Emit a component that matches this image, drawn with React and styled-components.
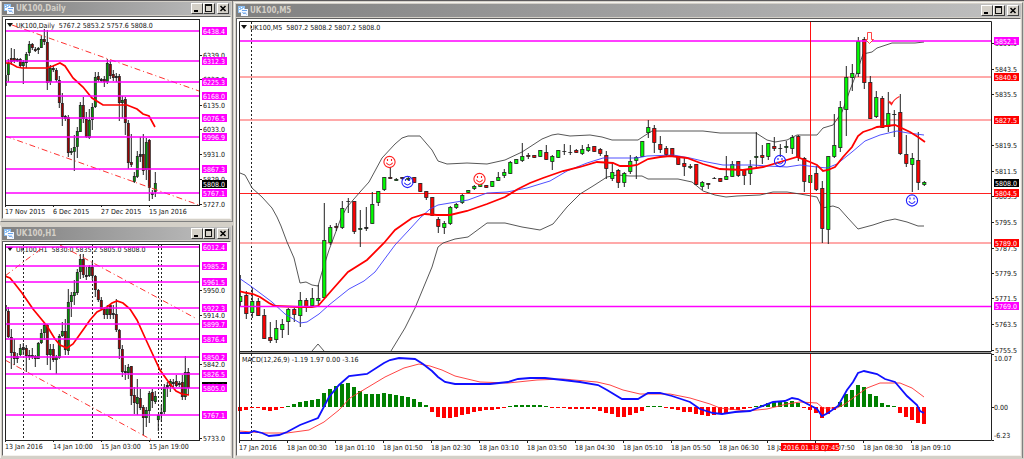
import React from "react";
import styled, { createGlobalStyle } from "styled-components";

const GlobalStyle = createGlobalStyle`
  body {
    margin: 0;
    background: #d4d0c8;
    font-family: "DejaVu Sans Condensed", "DejaVu Sans", sans-serif;
  }
`;

const Workspace = styled.main`
  display: grid;
  grid-template-columns: minmax(0, 233fr) minmax(0, 791fr);
  border-top: 1px solid #5c5a5c;
  margin-bottom: -1px;
`;

const Column = styled.div`
  display: flex;
  flex-direction: column;
  gap: 3px;
  ${({ $inset }) => $inset && "padding: 1px 1px 0;"}
`;

const Window = styled.section`
  border: 1px solid #808080;
  border-top-color: ${({ $inset }) => ($inset ? "#f4f2ee" : "#d4d0c8")};
  border-left-color: #f4f2ee;
  padding: 1px 1px 2px;
  background: #d4d0c8;

  &:first-child {
    ${({ $inset }) => !$inset && "border-top: 0;"}
  }
`;

const TitleBar = styled.header`
  display: flex;
  align-items: center;
  height: 13px;
  padding: 0 2px;
  margin-bottom: 1px;
  background: linear-gradient(to right, #808080, #c0c0c0);
`;

const Title = styled.h2`
  flex: 1;
  margin: 0 0 0 2px;
  font-size: 8px;
  line-height: 12px;
  font-weight: bold;
  color: #d4d0c8;
`;

const WindowButton = styled.button`
  display: flex;
  width: 12px;
  height: 11px;
  padding: 0;
  margin-left: ${({ $apart }) => ($apart ? "2px" : "0")};
  border: 1px solid;
  border-color: #fff #404040 #404040 #fff;
  background: #d4d0c8;
`;

const Pane = styled.div`
  border: 1px solid;
  border-color: #606060 #f4f2ee #f4f2ee #606060;
  background: #fff;
`;

const Plot = styled.svg`
  display: block;
  width: 100%;
  height: auto;
`;

const Label = styled.text`
  font-size: 7px;
  fill: ${({ $light }) => ($light ? "#fff" : "#111")};
  white-space: pre;
`;

const MAGENTA = "#ff00ff";
const RED = "#ff0000";
const INK = "#222";

// candles are [high, low, body top, body bottom, kind]
// g = up, r = down, d = doji
const dailyCandles = [
  [74, 87, 75, 86, "g"], [59, 82, 63, 75, "g"], [48, 65, 58, 62, "r"], [49, 63, 58, 61, "r"],
  [58, 62, 59, 61, "d"], [58, 68, 59, 66, "r"], [60, 84, 62, 66, "g"], [52, 68, 54, 63, "g"],
  [41, 56, 44, 53, "g"], [43, 50, 44, 48, "r"], [47, 52, 49, 51, "r"], [47, 54, 48, 50, "g"],
  [36, 48, 39, 48, "g"], [29, 45, 39, 42, "r"], [30, 90, 42, 83, "r"], [65, 85, 68, 82, "g"],
  [66, 72, 68, 70, "g"], [68, 82, 70, 80, "r"], [76, 108, 80, 103, "r"], [93, 126, 103, 117, "r"],
  [115, 121, 116, 119, "d"], [115, 157, 117, 153, "r"], [148, 155, 151, 153, "g"], [135, 171, 147, 152, "g"],
  [127, 158, 131, 147, "g"], [102, 132, 105, 132, "g"], [97, 123, 105, 119, "r"], [112, 138, 119, 137, "r"],
  [109, 139, 120, 138, "g"], [103, 130, 107, 120, "g"], [72, 108, 77, 107, "g"], [72, 82, 76, 80, "r"],
  [78, 82, 79, 81, "d"], [76, 87, 79, 82, "r"], [59, 84, 63, 82, "g"], [61, 79, 64, 76, "r"],
  [70, 81, 74, 78, "r"], [73, 82, 76, 78, "d"], [74, 121, 76, 103, "r"], [96, 118, 100, 103, "g"],
  [97, 135, 99, 123, "r"], [120, 169, 123, 163, "r"], [134, 167, 162, 165, "r"], [172, 183, 176, 182, "g"],
  [151, 178, 156, 177, "g"], [137, 162, 154, 157, "d"], [134, 175, 154, 171, "r"], [138, 180, 142, 170, "g"],
  [139, 201, 140, 188, "r"], [190, 199, 193, 195, "d"], [172, 197, 183, 192, "g"],
];

const hourCandles = [
  [295, 313, 305, 311, "r"], [307, 338, 311, 337, "r"], [329, 369, 337, 353, "r"], [339, 365, 352, 359, "r"],
  [353, 363, 356, 359, "d"], [344, 356, 348, 355, "g"], [343, 355, 347, 350, "d"], [345, 372, 348, 356, "r"],
  [350, 360, 355, 357, "d"], [348, 359, 355, 357, "d"], [355, 367, 356, 359, "r"], [342, 359, 343, 359, "g"],
  [329, 344, 333, 343, "g"], [323, 340, 325, 333, "g"], [324, 365, 325, 355, "r"], [344, 370, 349, 355, "g"],
  [344, 362, 349, 360, "r"], [355, 374, 357, 360, "g"], [334, 359, 336, 358, "g"], [322, 337, 331, 336, "g"],
  [319, 355, 331, 350, "r"], [289, 355, 302, 351, "g"], [292, 317, 295, 302, "g"], [280, 305, 292, 296, "g"],
  [269, 295, 272, 293, "g"], [254, 279, 259, 272, "g"], [254, 278, 259, 275, "r"], [267, 280, 275, 277, "d"],
  [265, 277, 267, 276, "g"], [262, 280, 267, 276, "r"], [275, 297, 276, 290, "r"], [289, 302, 290, 300, "r"],
  [297, 310, 300, 309, "r"], [307, 319, 309, 315, "r"], [305, 319, 308, 315, "g"], [304, 319, 305, 315, "r"],
  [305, 319, 313, 315, "d"], [299, 332, 314, 330, "r"], [329, 359, 330, 349, "r"], [345, 377, 349, 372, "r"],
  [365, 380, 371, 373, "d"], [364, 379, 367, 373, "g"], [366, 405, 366, 396, "r"], [387, 414, 395, 403, "r"],
  [379, 415, 397, 404, "g"], [389, 410, 398, 408, "r"], [405, 435, 407, 418, "r"], [407, 427, 410, 418, "g"],
  [391, 423, 393, 411, "g"], [389, 408, 392, 401, "r"], [391, 404, 396, 402, "g"], [414, 431, 415, 420, "g"],
  [405, 422, 412, 414, "g"], [384, 414, 387, 412, "g"], [382, 397, 385, 388, "d"], [379, 392, 381, 386, "g"],
  [379, 387, 382, 384, "d"], [375, 387, 381, 386, "r"], [381, 387, 383, 385, "d"], [375, 400, 382, 397, "r"],
  [356, 400, 372, 397, "g"], [368, 395, 372, 388, "r"],
];

const fiveMinCandles = [
  [275, 306, 296, 302, "g"], [291, 319, 295, 314, "r"], [288, 318, 301, 313, "g"], [298, 316, 301, 316, "r"],
  [309, 339, 315, 339, "r"], [322, 343, 337, 341, "r"], [320, 343, 328, 340, "g"], [319, 338, 324, 330, "g"],
  [308, 335, 309, 322, "g"], [308, 322, 309, 315, "r"], [292, 327, 300, 316, "g"], [298, 312, 300, 307, "r"],
  [288, 307, 298, 306, "g"], [285, 305, 298, 301, "g"], [203, 298, 240, 298, "g"], [225, 245, 227, 243, "g"],
  [223, 231, 226, 228, "r"], [201, 229, 208, 228, "g"], [198, 213, 201, 202, "d"], [201, 234, 201, 232, "r"],
  [210, 247, 228, 230, "g"], [207, 231, 227, 229, "d"], [192, 224, 204, 224, "g"], [191, 206, 191, 203, "g"],
  [177, 191, 177, 190, "g"], [167, 179, 177, 179, "r"], [178, 181, 179, 181, "g"], [177, 180, 177, 179, "r"],
  [177, 181, 178, 180, "g"], [177, 183, 177, 183, "r"], [183, 192, 183, 192, "r"], [191, 200, 191, 198, "r"],
  [197, 216, 197, 216, "r"], [217, 233, 219, 227, "r"], [221, 234, 223, 228, "g"], [206, 225, 207, 224, "g"],
  [203, 209, 204, 208, "g"], [194, 204, 195, 203, "g"], [190, 193, 190, 193, "g"], [185, 190, 186, 189, "g"],
  [184, 187, 184, 187, "g"], [185, 188, 185, 188, "r"], [181, 187, 181, 187, "g"], [172, 181, 177, 181, "g"],
  [169, 178, 172, 176, "g"], [161, 174, 162, 174, "g"], [159, 164, 159, 164, "g"], [143, 162, 156, 161, "g"],
  [153, 159, 155, 157, "r"], [155, 158, 155, 158, "r"], [150, 157, 150, 157, "g"], [145, 160, 152, 160, "r"],
  [155, 170, 156, 162, "g"], [150, 158, 150, 158, "g"], [144, 155, 151, 152, "d"], [145, 155, 152, 153, "d"],
  [149, 153, 150, 153, "r"], [145, 155, 149, 154, "g"], [144, 152, 147, 151, "g"], [146, 152, 146, 152, "r"],
  [148, 156, 149, 154, "r"], [151, 179, 155, 169, "r"], [163, 181, 172, 179, "g"], [169, 188, 170, 183, "r"],
  [172, 187, 173, 183, "g"], [155, 174, 161, 172, "g"], [156, 179, 157, 161, "g"], [141, 157, 141, 157, "g"],
  [120, 138, 127, 133, "g"], [125, 153, 128, 143, "r"], [136, 153, 144, 150, "r"], [146, 157, 148, 155, "r"],
  [148, 156, 148, 156, "r"], [156, 165, 156, 165, "r"], [158, 176, 163, 167, "r"], [164, 169, 166, 168, "g"],
  [164, 185, 164, 185, "r"], [181, 190, 182, 187, "g"], [183, 189, 183, 185, "r"], [177, 179, 178, 179, "d"],
  [178, 182, 178, 182, "r"], [156, 180, 176, 180, "g"], [161, 177, 164, 177, "g"], [161, 177, 161, 176, "r"],
  [169, 185, 170, 176, "r"], [160, 185, 166, 174, "g"], [132, 167, 156, 158, "g"], [145, 164, 155, 158, "r"],
  [143, 160, 143, 157, "g"], [137, 151, 146, 149, "r"], [144, 157, 148, 149, "d"], [141, 153, 146, 148, "g"],
  [135, 154, 137, 149, "g"], [135, 161, 136, 158, "r"], [157, 192, 158, 182, "r"], [175, 183, 175, 183, "g"],
  [166, 191, 173, 190, "r"], [181, 243, 188, 229, "r"], [156, 244, 156, 230, "g"], [114, 158, 145, 157, "g"],
  [101, 152, 107, 148, "g"], [66, 136, 77, 110, "g"], [64, 91, 73, 78, "g"], [37, 77, 41, 74, "g"],
  [37, 89, 39, 83, "r"], [76, 119, 82, 119, "r"], [91, 118, 97, 117, "g"], [96, 128, 98, 128, "r"],
  [92, 132, 113, 127, "g"], [110, 137, 114, 115, "d"], [94, 155, 112, 154, "r"], [135, 167, 154, 164, "r"],
  [153, 192, 158, 165, "g"], [132, 190, 160, 183, "r"], [181, 186, 182, 185, "g"],
];

// one histogram bar per candle, in px from the zero line
const histogram = [
  -4, -3, -1, -1, -3, -4, -3, -1, 1, 3, 5, 6, 7, 8, 14, 18, 21, 23, 24, 20,
  16, 13, 13, 13, 14, 13, 12, 11, 10, 8, 5, 2, -5, -10, -11, -11, -10, -8, -7, -5,
  -4, -3, -3, -2, -1, 1, 2, 2, 2, 2, 2, 1, -1, -1, -1, -2, -2, -2, -2, -2,
  -4, -6, -7, -10, -10, -8, -6, -4, 1, 1, 1, -1, -2, -3, -5, -5, -7, -8, -9, -8,
  -7, -6, -3, -3, -2, -1, 1, 2, 4, 5, 5, 5, 6, 4, -1, -3, -6, -11, -7, -3,
  5, 13, 17, 22, 20, 13, 11, 4, 2, 1, -6, -10, -13, -16, -17,
];

const upperBand =
  "240,173 245,175 250,184 252,188 262,197 272,208 277,217 281,226 287,242 294,258 300,283 306,282 312,285 318,286 322,272 329,250 335,234 341,218 347,207 360,192 369,182 382,158 395,144 402,138 408,136 420,136 432,150 438,161 447,164 467,163 487,164 505,160 522,152 542,139 552,135 558,134 570,136 590,135 602,137 612,140 638,140 644,136 652,131 703,131 720,133 756,133 767,140 775,142 787,140 797,135 817,135 823,128 833,125 842,112 850,90 857,72 863,54 872,52 877,48 892,43 915,43 924,42";
const lowerBand =
  "391,351 405,328 415,308 432,267 438,247 443,243 455,239 468,237 487,223 505,223 522,227 540,230 553,224 567,207 580,194 593,186 607,177 617,175 630,176 642,176 648,179 678,179 692,182 703,191 715,195 726,197 737,196 760,195 773,192 787,192 800,194 817,197 822,208 833,206 839,208 847,217 858,229 873,225 885,221 895,219 907,222 918,226 924,226";
const redAverage =
  "239,291 247,293 253,294 260,297 269,303 275,306 299,307 312,307 318,306 332,290 348,272 367,260 384,243 395,230 412,218 425,214 437,215 450,215 467,211 487,204 505,197 518,189 530,183 543,178 563,171 580,167 597,162 613,163 620,166 630,166 637,165 648,159 660,157 670,156 687,158 703,164 720,169 743,170 763,167 780,162 797,157 810,162 817,165 823,171 828,170 835,167 843,157 852,147 858,136 863,132 872,129 877,127 895,125 910,132 918,137 925,142";
const blueAverage =
  "239,278 252,287 272,302 285,314 300,323 307,322 319,314 329,305 339,297 349,289 364,281 375,272 395,245 409,230 420,218 430,209 438,205 450,203 468,200 487,193 507,192 527,188 550,181 567,171 587,163 603,158 637,158 647,156 673,155 690,158 707,162 723,165 753,165 767,166 787,167 800,165 817,167 827,168 837,164 852,152 865,141 880,135 897,131 908,133 924,135";
const macdLine =
  "239,433 249,433 254,431 262,433 269,436 279,435 287,432 300,425 318,418 329,397 339,385 349,376 367,374 384,363 390,360 399,358 415,359 423,364 432,371 438,377 445,382 455,384 490,384 508,382 518,379 530,378 545,378 563,380 580,382 598,385 607,390 622,399 638,399 648,393 660,393 672,396 690,402 700,409 713,413 722,414 735,412 750,411 760,407 773,402 785,401 792,398 798,399 817,409 822,416 828,413 838,406 847,390 853,382 858,373 864,371 877,374 885,379 895,382 907,396 917,405 920,411 924,413";
const signalLine =
  "239,431 265,433 287,433 309,430 324,422 339,410 350,398 365,389 385,377 404,368 419,364 430,366 442,370 455,376 480,382 508,383 537,380 563,379 597,382 610,385 623,390 640,394 670,394 690,398 710,404 720,408 747,411 767,409 787,404 800,402 817,403 823,408 837,408 845,404 853,398 867,388 880,383 900,383 912,388 924,397";

const charts = {
  daily: {
    title: "UK100,Daily",
    quote: "UK100,Daily  5767.2 5853.2 5757.6 5808.0",
    viewBox: "3 17 227 201",
    frame: [5, 19, 200, 206],
    quoteY: 28,
    candles: dailyCandles,
    levels: [31, 61, 82, 96, 118, 137, 169, 193],
    average:
      "5,63 10,63 17,67 22,68 47,68 53,66 60,63 65,66 73,78 83,87 92,98 103,105 127,105 137,109 143,114 149,116 155,127",
    channel: ["12,25 199,91", "5,136 199,205"],
    separators: [],
    prices: [
      ["6339.0", 55], ["6237.0", 79], ["6135.0", 105], ["6033.0", 129],
      ["5931.0", 154], ["5829.0", 179], ["5727.0", 204],
    ],
    tags: [
      ["6438.4", 31], ["6312.3", 61], ["6225.3", 82], ["6168.0", 96], ["6076.5", 118],
      ["5996.9", 137], ["5867.3", 169], ["5808.0", 184, "#000"], ["5767.1", 193],
    ],
    dates: [["17 Nov 2015", 5], ["6 Dec 2015", 53], ["27 Dec 2015", 101], ["15 Jan 2016", 149]],
  },
  hour: {
    title: "UK100,H1",
    quote: "UK100,H1  5830.0 5835.2 5805.0 5808.0",
    viewBox: "3 242 227 213",
    frame: [5, 244, 200, 441],
    quoteY: 252,
    candles: hourCandles,
    levels: [247, 266, 282, 308, 324, 339, 357, 374, 388, 415],
    average:
      "5,276 10,278 15,284 22,293 33,309 47,326 55,339 60,345 67,348 73,344 83,330 90,320 97,312 107,307 112,303 117,301 123,303 130,309 137,320 147,342 160,370 170,384 176,391 182,394 189,395",
    channel: ["60,245 197,319", "5,360 152,440", "5,276 30,257 45,246"],
    separators: [23, 92, 158, 161],
    prices: [["5950.0", 290], ["5914.0", 315], ["5842.0", 364], ["5733.0", 438]],
    tags: [
      ["5808.0", 386, "#000"], ["6012.4", 247], ["5985.2", 266], ["5961.5", 282], ["5922.3", 308],
      ["5899.7", 324], ["5876.4", 339], ["5850.2", 357], ["5826.5", 374], ["5805.0", 388], ["5767.1", 415],
    ],
    dates: [["13 Jan 2016", 5], ["14 Jan 10:00", 53], ["15 Jan 03:00", 101], ["15 Jan 19:00", 149]],
  },
};

const fiveMinPrices = [
  ["5851.5", 43], ["5843.5", 69], ["5835.5", 94], ["5819.5", 145],
  ["5811.5", 171], ["5803.5", 196], ["5795.5", 222], ["5787.5", 248], ["5779.5", 273],
  ["5771.5", 298], ["5763.5", 324], ["5755.5", 350],
];

const fiveMinTags = [
  ["5852.1", 41, MAGENTA], ["5840.9", 77, RED], ["5827.5", 120, RED], ["5808.0", 183, "#000"],
  ["5804.5", 193, RED], ["5789.0", 243, RED], ["5769.0", 306, MAGENTA],
];

const fiveMinDates = [
  "17 Jan 2016", "18 Jan 00:30", "18 Jan 01:10", "18 Jan 01:50", "18 Jan 02:30",
  "18 Jan 03:10", "18 Jan 03:50", "18 Jan 04:30", "18 Jan 05:10", "18 Jan 05:50",
  "18 Jan 06:30", "18 Jan 07:10", "18 Jan 07:50", "18 Jan 08:30", "18 Jan 09:10",
].map((t, i) => [t, 239 + i * 48]);

const Candles = ({ data, start, step, small }) => {
  const fills = small
    ? { g: "#00a000", r: "#a80000", d: INK }
    : { g: "#00ff00", r: "#ff0000", d: INK };
  const width = small ? 2 : 3.2;
  return (
    <g>
      {data.map(([high, low, top, bottom, kind], i) => {
        const center = start + i * step + 0.3;
        return (
          <g key={i}>
            <rect x={center - 0.5} y={high} width="1" height={low - high} fill={INK} />
            <rect
              x={center - width / 2}
              y={top + 0.4}
              width={width}
              height={Math.max(bottom - top - 0.8, 0.2)}
              fill={fills[kind]}
              stroke={INK}
              strokeWidth="0.8"
            />
          </g>
        );
      })}
    </g>
  );
};

const PriceScale = ({ prices, tags, x }) => (
  <g>
    {prices.map(([t, y]) => (
      <g key={t}>
        <rect x={x} y={y} width="2" height="1" fill={INK} />
        <Label x={x + 3} y={y + 3}>{t}</Label>
      </g>
    ))}
    {tags.map(([t, y, fill = MAGENTA]) => (
      <g key={t}>
        <rect x={x + 2} y={y - 4} width="25" height="8" fill={fill} />
        <Label x={x + 3} y={y + 3} $light>{t}</Label>
      </g>
    ))}
  </g>
);

const TimeScale = ({ dates, y }) => (
  <g>
    {dates.map(([t, x]) => (
      <g key={t}>
        <rect x={x} y={y} width="1" height="2" fill={INK} />
        <Label x={x} y={y + 9}>{t}</Label>
      </g>
    ))}
  </g>
);

const Quote = ({ x, y, children }) => (
  <g>
    <path d={`M${x - 1} ${y - 5}h6l-3 4z`} fill="#111" />
    <Label x={x + 8} y={y}>{children}</Label>
  </g>
);

const Smiley = ({ x, y, color }) => (
  <g fill="none" stroke={color} strokeWidth="1.1">
    <circle cx={x} cy={y} r="5.6" />
    <path d={`M${x - 3.2} ${y + 0.8}q3.2 4.4 6.4 0M${x - 2} ${y - 3}v2M${x + 2} ${y - 3}v2`} />
  </g>
);

const ChartIcon = () => (
  <svg width="10" height="10" viewBox="0 0 10 10" aria-hidden="true">
    <path d="M0 0h7v7h-7z" fill="#8fc1f4" />
    <path d="M1 2h1v1h-1zM3 1h1v1h-1zM5 2h1v1h-1zM1 4h2v2h-2z" fill="#fff" />
    <path d="M3 3h7v7h-7z" fill="#f4f8ff" />
    <path d="M4 4.5h5M4.5 6l1.5 2 1-1.5 1.5 2" fill="none" stroke="#6ba4ea" />
  </svg>
);

const ChartWindow = ({ title, inset, children }) => (
  <Window $inset={inset} aria-label={title}>
    <TitleBar>
      <ChartIcon />
      <Title>{title}</Title>
      <WindowButton aria-label="Minimize">
        <svg width="10" height="9"><path d="M2 6h4v2h-4z" fill="#000" /></svg>
      </WindowButton>
      <WindowButton aria-label="Maximize">
        <svg width="10" height="9"><path d="M1 0h7v8h-7zM2 2v5h5v-5z" fill="#111" fillRule="evenodd" /></svg>
      </WindowButton>
      <WindowButton aria-label="Close" $apart>
        <svg width="10" height="9"><path d="M2.5 2l5 5M7.5 2l-5 5" stroke="#000" strokeWidth="1.5" /></svg>
      </WindowButton>
    </TitleBar>
    <Pane>{children}</Pane>
  </Window>
);

const SmallChart = ({ chart }) => {
  const [left, top, right, bottom] = chart.frame;
  const clip = `clip-${chart.title.replace(",", "-")}`;
  return (
    <ChartWindow title={chart.title}>
      <Plot viewBox={chart.viewBox}>
        <clipPath id={clip}>
          <rect x={left} y={top} width={right - left} height={bottom - top} />
        </clipPath>
        <g clipPath={`url(#${clip})`}>
          {chart.separators.map((x) => (
            <path key={x} d={`M${x + 0.5} ${top}V${bottom}`} stroke={INK} strokeDasharray="2 2" />
          ))}
          <Quote x={8} y={chart.quoteY}>{chart.quote}</Quote>
          <Candles data={chart.candles} start={5} step={3} small />
          {chart.channel.map((points) => (
            <polyline key={points} points={points} fill="none" stroke="#ff3030" strokeDasharray="6 3 1 3" />
          ))}
          <polyline points={chart.average} fill="none" stroke={RED} strokeWidth="1.7" />
          {chart.levels.map((y) => (
            <path key={y} d={`M${left} ${y}H${right}`} stroke={MAGENTA} strokeWidth="1.5" />
          ))}
        </g>
        <rect
          x={left + 0.5}
          y={top + 0.5}
          width={right - left - 1}
          height={bottom - top - 1}
          fill="none"
          stroke={INK}
        />
        <PriceScale prices={chart.prices} tags={chart.tags} x={200} />
        <TimeScale dates={chart.dates} y={bottom - 1} />
      </Plot>
    </ChartWindow>
  );
};

const FiveMinuteChart = () => (
  <ChartWindow title="UK100,M5" inset>
    <Plot viewBox="237 19 783 436">
      <clipPath id="clip-m5">
        <rect x="239" y="21" width="753" height="331" />
      </clipPath>
      <path d="M251.5 22V440" stroke={INK} strokeDasharray="2 2" />
      <Quote x={242} y={30}>UK100,M5  5807.2 5808.2 5807.2 5808.0</Quote>
      <g clipPath="url(#clip-m5)">
        {[77, 120, 243].map((y) => (
          <path key={y} d={`M239 ${y}H991`} stroke="#ff8c8c" strokeWidth="1.4" />
        ))}
        <path d="M239 193.5H991" stroke="#ff2020" />
        <g fill="none" stroke="#444" strokeWidth="0.9">
          <polyline points={upperBand} />
          <polyline points={lowerBand} />
          <polyline points="312,351 318,344 324,351" />
        </g>
        <Candles data={fiveMinCandles} start={240} step={6} />
        <polyline points={blueAverage} fill="none" stroke="#3c3cff" strokeWidth="0.9" />
        <polyline points={redAverage} fill="none" stroke={RED} strokeWidth="1.8" />
        <path d="M239 41H991M239 306.5H991" stroke={MAGENTA} strokeWidth="1.6" />
        <Smiley x={389.5} y={162} color="#ff2020" />
        <Smiley x={407.5} y={182} color="#2020ff" />
        <Smiley x={479.5} y={179} color="#ff2020" />
        <Smiley x={780} y={161} color="#2020ff" />
        <Smiley x={912} y={200.5} color="#2020ff" />
        <path d="M867.5 32.5h4v7h2l-4 4l-4 -4h2z" fill="#fff" stroke="#ff3030" strokeWidth="0.9" />
        <path d="M888.5 101l3 3.5q2-5 8-8" fill="none" stroke="#ff2020" strokeWidth="1.2" />
        <path d="M889.5 102l2.5 2" fill="none" stroke="#ff2020" strokeWidth="2" />
      </g>
      <g shapeRendering="crispEdges">
        {histogram.map((v, i) => (
          <rect
            key={i}
            x={238 + i * 6}
            y={v > 0 ? 407 - v : 407}
            width="4"
            height={Math.abs(v)}
            fill={v > 0 ? "#008000" : RED}
          />
        ))}
      </g>
      <polyline points={signalLine} fill="none" stroke="#ff3030" strokeWidth="0.9" />
      <polyline points={macdLine} fill="none" stroke="#1010ff" strokeWidth="1.8" />
      <path d="M810.5 22V440" stroke="#ff1010" />
      <path d="M239 352H991" stroke="#999" strokeWidth="2" />
      <path d="M239.5 440V21.5H991.5V351.5H239M239 353.5H991.5V440.5H239" fill="none" stroke={INK} />
      <Label x="242" y="362">MACD(12,26,9) -1.19 1.97 0.00 -3.16</Label>
      <PriceScale prices={fiveMinPrices} tags={fiveMinTags} x={992} />
      <path d="M992 354.5h2M992 407.5h2M992 440.5h2" stroke={INK} />
      <Label x="994" y="361">10.07</Label>
      <Label x="994" y="410">0.00</Label>
      <Label x="994" y="438">-6.23</Label>
      <TimeScale dates={fiveMinDates} y={441} />
      <rect x="781" y="443" width="58" height="8" fill={RED} />
      <Label x="783" y="450" $light>2016.01.18 07:45</Label>
    </Plot>
  </ChartWindow>
);

const App = () => {
  return (
    <>
      <GlobalStyle />
      <Workspace>
        <Column>
          <SmallChart chart={charts.daily} />
          <SmallChart chart={charts.hour} />
        </Column>
        <Column $inset>
          <FiveMinuteChart />
        </Column>
      </Workspace>
    </>
  );
};

export default App;
